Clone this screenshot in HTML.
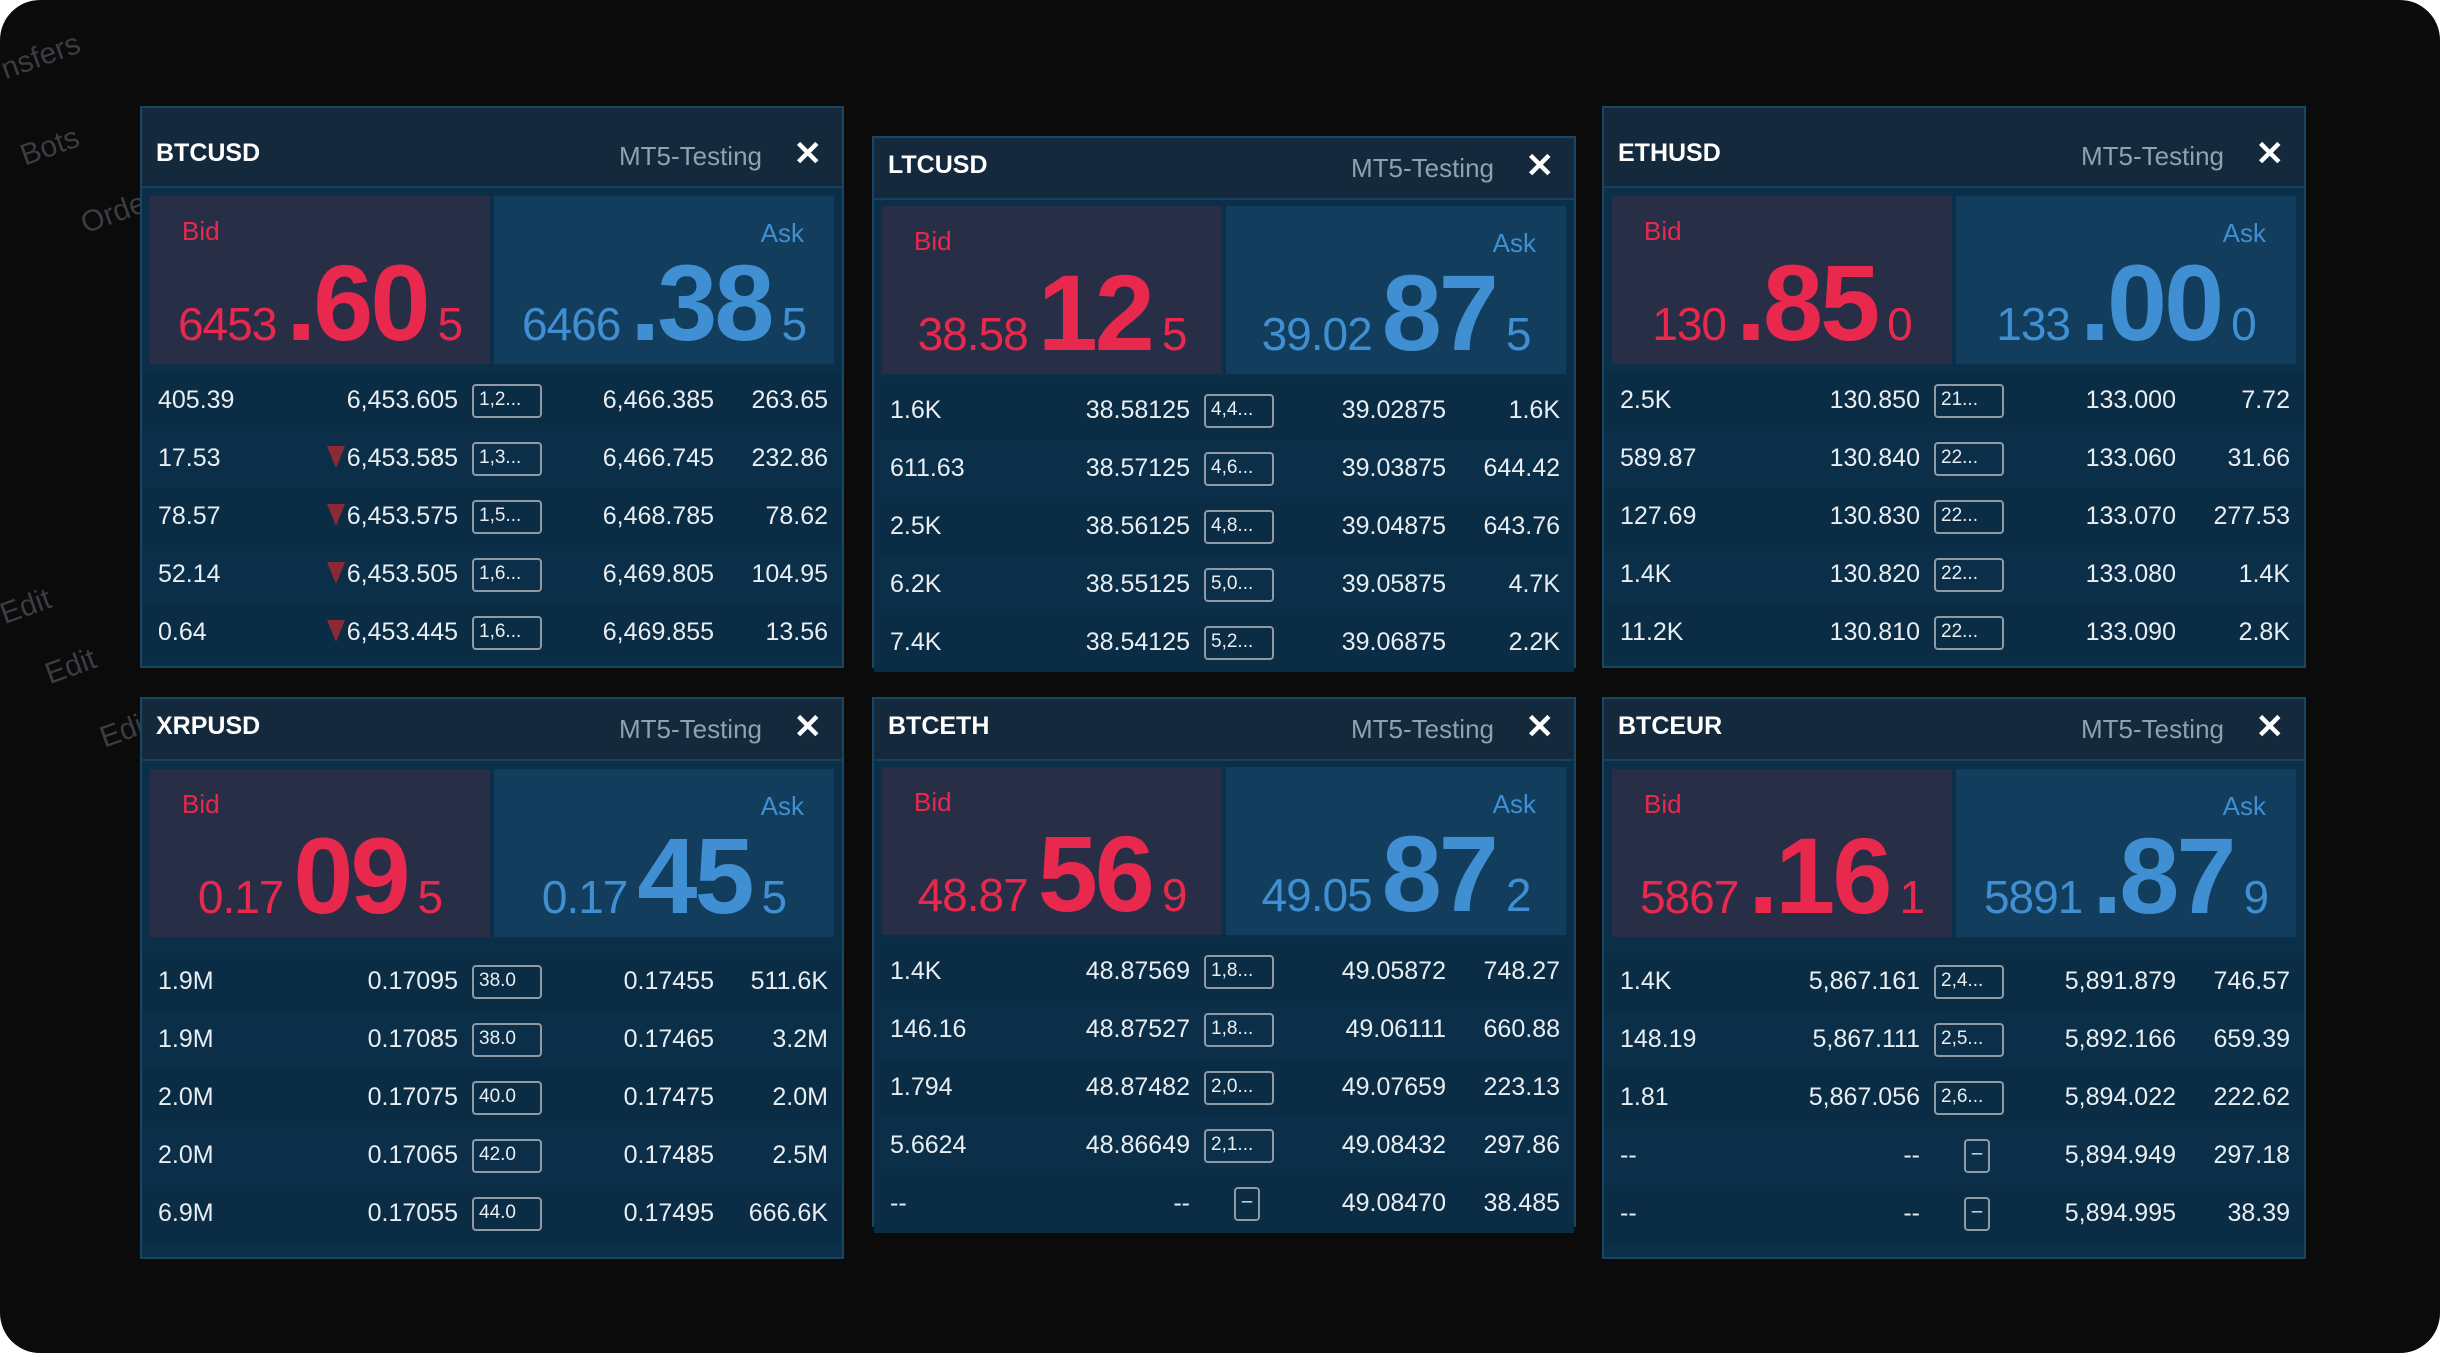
<!DOCTYPE html>
<html><head><meta charset="utf-8"><style>
*{margin:0;padding:0;box-sizing:border-box}
html,body{width:2440px;height:1353px;background:#fff;overflow:hidden}
.bg{position:absolute;left:0;top:0;width:2440px;height:1353px;background:#0b0b0c;border-radius:40px;overflow:hidden;font-family:"Liberation Sans Narrow","Liberation Sans",sans-serif}
.ghost{position:absolute;color:#3a3d42;font-size:30px;font-family:"Liberation Sans",sans-serif}
.p{position:absolute;width:704px;background:#0b2f48;border:2px solid #1a4563;color:#e9eef2}
.hd{position:relative;background:#14293b;border-bottom:2px solid #17405e}
.sym{position:absolute;left:14px;bottom:18px;font-size:25px;font-weight:bold;color:#fff;font-family:"Liberation Sans",sans-serif}
.srv{position:absolute;right:80px;bottom:14px;font-size:26px;color:#8ea2b4}
.x{position:absolute;right:20px;bottom:12px;font-size:34px;font-weight:bold;color:#fff;font-family:"Liberation Sans",sans-serif}
.bb,.ab{position:absolute;top:0;height:168px}
.qt{position:relative;height:176px}
.bb{left:8px;width:340px;background:#292e47;color:#e8294d}
.ab{left:352px;width:340px;background:#123d5c;color:#3f8fd2}
.lb{position:absolute;font-size:26px}
.bb .lb{left:32px;top:20px}
.ab .lb{right:30px;top:22px}
.pr{position:absolute;left:0;right:0;top:44px;text-align:center;white-space:nowrap}
.s{font-size:46px;letter-spacing:-1px}
.b{font-size:108px;font-weight:bold;font-family:"Liberation Sans",sans-serif;margin:0 10px;letter-spacing:-3px}
.r{position:relative;height:58px;font-size:25px}
.r:nth-child(odd){background:#0a2c44}
.r span{position:absolute;top:14px}
.v{left:16px}.bp{right:384px}.ap{right:128px}.av{right:14px}
.bx{left:330px;top:12px!important;width:70px;height:34px;border:2px solid #8f9aa4;border-radius:4px;font-size:19px;padding:3px 0 0 5px;color:#e9eef2}
.bx.m{left:360px;width:26px;text-align:center;padding:2px 0 0}
.tri{display:inline-block;width:0;height:0;border-left:9px solid transparent;border-right:9px solid transparent;border-top:22px solid #8b2a35;margin-right:2px;vertical-align:-2px}
</style></head><body><div class="bg">
<div class="ghost" style="left:0;top:40px;transform:rotate(-20deg)">nsfers</div>
<div class="ghost" style="left:20px;top:130px;transform:rotate(-20deg)">Bots</div>
<div class="ghost" style="left:80px;top:195px;transform:rotate(-20deg)">Order</div>
<div class="ghost" style="left:0;top:590px;transform:rotate(-20deg)">Edit</div>
<div class="ghost" style="left:45px;top:650px;transform:rotate(-20deg)">Edit</div>
<div class="ghost" style="left:100px;top:715px;transform:rotate(-20deg)">Edi</div>

<!-- BTCUSD -->
<div class="p" style="left:140px;top:106px;height:562px">
<div class="hd" style="height:80px"><div class="sym">BTCUSD</div><div class="srv">MT5-Testing</div><div class="x">✕</div></div>
<div class="qt" style="margin-top:8px"><div class="bb"><div class="lb">Bid</div><div class="pr"><span class="s">6453</span><span class="b">.60</span><span class="s">5</span></div></div><div class="ab"><div class="lb">Ask</div><div class="pr"><span class="s">6466</span><span class="b">.38</span><span class="s">5</span></div></div></div>
<div>
<div class="r"><span class="v">405.39</span><span class="bp">6,453.605</span><span class="bx">1,2...</span><span class="ap">6,466.385</span><span class="av">263.65</span></div>
<div class="r"><span class="v">17.53</span><span class="bp"><i class="tri"></i>6,453.585</span><span class="bx">1,3...</span><span class="ap">6,466.745</span><span class="av">232.86</span></div>
<div class="r"><span class="v">78.57</span><span class="bp"><i class="tri"></i>6,453.575</span><span class="bx">1,5...</span><span class="ap">6,468.785</span><span class="av">78.62</span></div>
<div class="r"><span class="v">52.14</span><span class="bp"><i class="tri"></i>6,453.505</span><span class="bx">1,6...</span><span class="ap">6,469.805</span><span class="av">104.95</span></div>
<div class="r"><span class="v">0.64</span><span class="bp"><i class="tri"></i>6,453.445</span><span class="bx">1,6...</span><span class="ap">6,469.855</span><span class="av">13.56</span></div>
</div></div>

<!-- LTCUSD -->
<div class="p" style="left:872px;top:136px;height:532px">
<div class="hd" style="height:62px"><div class="sym">LTCUSD</div><div class="srv">MT5-Testing</div><div class="x">✕</div></div>
<div class="qt" style="margin-top:6px"><div class="bb"><div class="lb">Bid</div><div class="pr"><span class="s">38.58</span><span class="b">12</span><span class="s">5</span></div></div><div class="ab"><div class="lb">Ask</div><div class="pr"><span class="s">39.02</span><span class="b">87</span><span class="s">5</span></div></div></div>
<div>
<div class="r"><span class="v">1.6K</span><span class="bp">38.58125</span><span class="bx">4,4...</span><span class="ap">39.02875</span><span class="av">1.6K</span></div>
<div class="r"><span class="v">611.63</span><span class="bp">38.57125</span><span class="bx">4,6...</span><span class="ap">39.03875</span><span class="av">644.42</span></div>
<div class="r"><span class="v">2.5K</span><span class="bp">38.56125</span><span class="bx">4,8...</span><span class="ap">39.04875</span><span class="av">643.76</span></div>
<div class="r"><span class="v">6.2K</span><span class="bp">38.55125</span><span class="bx">5,0...</span><span class="ap">39.05875</span><span class="av">4.7K</span></div>
<div class="r"><span class="v">7.4K</span><span class="bp">38.54125</span><span class="bx">5,2...</span><span class="ap">39.06875</span><span class="av">2.2K</span></div>
</div></div>

<!-- ETHUSD -->
<div class="p" style="left:1602px;top:106px;height:562px">
<div class="hd" style="height:80px"><div class="sym">ETHUSD</div><div class="srv">MT5-Testing</div><div class="x">✕</div></div>
<div class="qt" style="margin-top:8px"><div class="bb"><div class="lb">Bid</div><div class="pr"><span class="s">130</span><span class="b">.85</span><span class="s">0</span></div></div><div class="ab"><div class="lb">Ask</div><div class="pr"><span class="s">133</span><span class="b">.00</span><span class="s">0</span></div></div></div>
<div>
<div class="r"><span class="v">2.5K</span><span class="bp">130.850</span><span class="bx">21...</span><span class="ap">133.000</span><span class="av">7.72</span></div>
<div class="r"><span class="v">589.87</span><span class="bp">130.840</span><span class="bx">22...</span><span class="ap">133.060</span><span class="av">31.66</span></div>
<div class="r"><span class="v">127.69</span><span class="bp">130.830</span><span class="bx">22...</span><span class="ap">133.070</span><span class="av">277.53</span></div>
<div class="r"><span class="v">1.4K</span><span class="bp">130.820</span><span class="bx">22...</span><span class="ap">133.080</span><span class="av">1.4K</span></div>
<div class="r"><span class="v">11.2K</span><span class="bp">130.810</span><span class="bx">22...</span><span class="ap">133.090</span><span class="av">2.8K</span></div>
</div></div>

<!-- XRPUSD -->
<div class="p" style="left:140px;top:697px;height:562px">
<div class="hd" style="height:62px"><div class="sym">XRPUSD</div><div class="srv">MT5-Testing</div><div class="x">✕</div></div>
<div class="qt" style="margin-top:8px"><div class="bb"><div class="lb">Bid</div><div class="pr"><span class="s">0.17</span><span class="b">09</span><span class="s">5</span></div></div><div class="ab"><div class="lb">Ask</div><div class="pr"><span class="s">0.17</span><span class="b">45</span><span class="s">5</span></div></div></div>
<div style="padding-top:8px">
<div class="r"><span class="v">1.9M</span><span class="bp">0.17095</span><span class="bx">38.0</span><span class="ap">0.17455</span><span class="av">511.6K</span></div>
<div class="r"><span class="v">1.9M</span><span class="bp">0.17085</span><span class="bx">38.0</span><span class="ap">0.17465</span><span class="av">3.2M</span></div>
<div class="r"><span class="v">2.0M</span><span class="bp">0.17075</span><span class="bx">40.0</span><span class="ap">0.17475</span><span class="av">2.0M</span></div>
<div class="r"><span class="v">2.0M</span><span class="bp">0.17065</span><span class="bx">42.0</span><span class="ap">0.17485</span><span class="av">2.5M</span></div>
<div class="r"><span class="v">6.9M</span><span class="bp">0.17055</span><span class="bx">44.0</span><span class="ap">0.17495</span><span class="av">666.6K</span></div>
</div></div>

<!-- BTCETH -->
<div class="p" style="left:872px;top:697px;height:530px">
<div class="hd" style="height:62px"><div class="sym">BTCETH</div><div class="srv">MT5-Testing</div><div class="x">✕</div></div>
<div class="qt" style="margin-top:6px"><div class="bb"><div class="lb">Bid</div><div class="pr"><span class="s">48.87</span><span class="b">56</span><span class="s">9</span></div></div><div class="ab"><div class="lb">Ask</div><div class="pr"><span class="s">49.05</span><span class="b">87</span><span class="s">2</span></div></div></div>
<div>
<div class="r"><span class="v">1.4K</span><span class="bp">48.87569</span><span class="bx">1,8...</span><span class="ap">49.05872</span><span class="av">748.27</span></div>
<div class="r"><span class="v">146.16</span><span class="bp">48.87527</span><span class="bx">1,8...</span><span class="ap">49.06111</span><span class="av">660.88</span></div>
<div class="r"><span class="v">1.794</span><span class="bp">48.87482</span><span class="bx">2,0...</span><span class="ap">49.07659</span><span class="av">223.13</span></div>
<div class="r"><span class="v">5.6624</span><span class="bp">48.86649</span><span class="bx">2,1...</span><span class="ap">49.08432</span><span class="av">297.86</span></div>
<div class="r"><span class="v">--</span><span class="bp">--</span><span class="bx m">–</span><span class="ap">49.08470</span><span class="av">38.485</span></div>
</div></div>

<!-- BTCEUR -->
<div class="p" style="left:1602px;top:697px;height:562px">
<div class="hd" style="height:62px"><div class="sym">BTCEUR</div><div class="srv">MT5-Testing</div><div class="x">✕</div></div>
<div class="qt" style="margin-top:8px"><div class="bb"><div class="lb">Bid</div><div class="pr"><span class="s">5867</span><span class="b">.16</span><span class="s">1</span></div></div><div class="ab"><div class="lb">Ask</div><div class="pr"><span class="s">5891</span><span class="b">.87</span><span class="s">9</span></div></div></div>
<div style="padding-top:8px">
<div class="r"><span class="v">1.4K</span><span class="bp">5,867.161</span><span class="bx">2,4...</span><span class="ap">5,891.879</span><span class="av">746.57</span></div>
<div class="r"><span class="v">148.19</span><span class="bp">5,867.111</span><span class="bx">2,5...</span><span class="ap">5,892.166</span><span class="av">659.39</span></div>
<div class="r"><span class="v">1.81</span><span class="bp">5,867.056</span><span class="bx">2,6...</span><span class="ap">5,894.022</span><span class="av">222.62</span></div>
<div class="r"><span class="v">--</span><span class="bp">--</span><span class="bx m">–</span><span class="ap">5,894.949</span><span class="av">297.18</span></div>
<div class="r"><span class="v">--</span><span class="bp">--</span><span class="bx m">–</span><span class="ap">5,894.995</span><span class="av">38.39</span></div>
</div></div>
</div></body></html>
